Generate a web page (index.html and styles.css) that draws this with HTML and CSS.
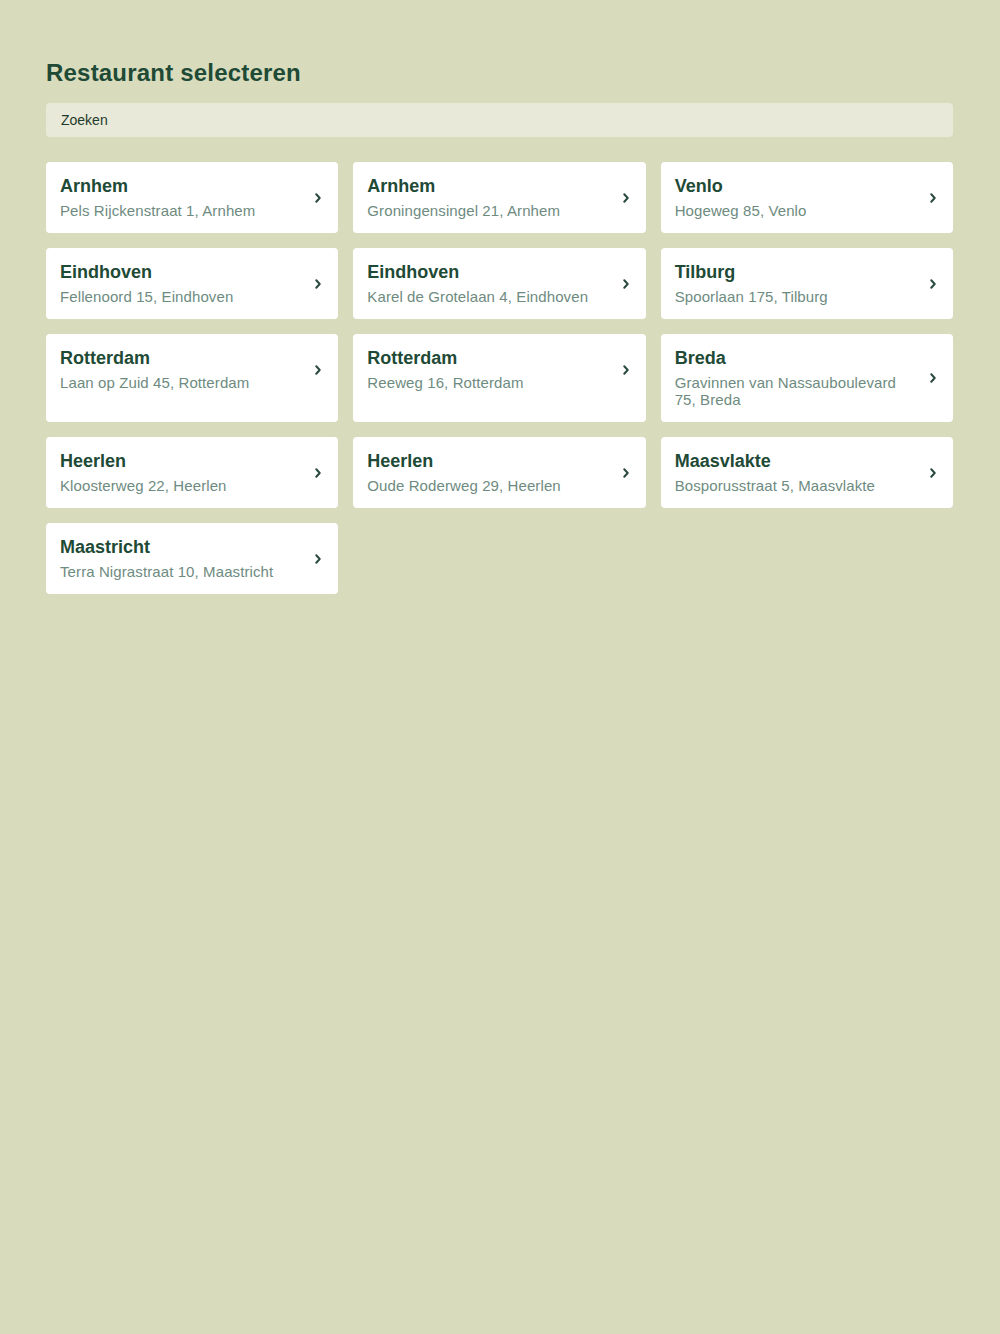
FILE: index.html
```html
<!DOCTYPE html>
<html lang="nl">
<head>
<meta charset="utf-8">
<title>Restaurant selecteren</title>
<link rel="stylesheet" href="styles.css">
</head>
<body>
<main class="page">
  <h1 class="title">Restaurant selecteren</h1>
  <div class="search">Zoeken</div>
  <div class="grid">
    <a class="card" href="#"><div class="row"><div class="info"><div class="name">Arnhem</div><div class="addr">Pels Rijckenstraat 1, Arnhem</div></div><svg class="chev" viewBox="0 0 6 10" width="6" height="10"><path d="M1.3 1.3l3.4 3.7-3.4 3.7" fill="none" stroke="#2b4a3f" stroke-width="2" stroke-linecap="round" stroke-linejoin="round"/></svg></div></a>
    <a class="card" href="#"><div class="row"><div class="info"><div class="name">Arnhem</div><div class="addr">Groningensingel 21, Arnhem</div></div><svg class="chev" viewBox="0 0 6 10" width="6" height="10"><path d="M1.3 1.3l3.4 3.7-3.4 3.7" fill="none" stroke="#2b4a3f" stroke-width="2" stroke-linecap="round" stroke-linejoin="round"/></svg></div></a>
    <a class="card" href="#"><div class="row"><div class="info"><div class="name">Venlo</div><div class="addr">Hogeweg 85, Venlo</div></div><svg class="chev" viewBox="0 0 6 10" width="6" height="10"><path d="M1.3 1.3l3.4 3.7-3.4 3.7" fill="none" stroke="#2b4a3f" stroke-width="2" stroke-linecap="round" stroke-linejoin="round"/></svg></div></a>
    <a class="card" href="#"><div class="row"><div class="info"><div class="name">Eindhoven</div><div class="addr">Fellenoord 15, Eindhoven</div></div><svg class="chev" viewBox="0 0 6 10" width="6" height="10"><path d="M1.3 1.3l3.4 3.7-3.4 3.7" fill="none" stroke="#2b4a3f" stroke-width="2" stroke-linecap="round" stroke-linejoin="round"/></svg></div></a>
    <a class="card" href="#"><div class="row"><div class="info"><div class="name">Eindhoven</div><div class="addr">Karel de Grotelaan 4, Eindhoven</div></div><svg class="chev" viewBox="0 0 6 10" width="6" height="10"><path d="M1.3 1.3l3.4 3.7-3.4 3.7" fill="none" stroke="#2b4a3f" stroke-width="2" stroke-linecap="round" stroke-linejoin="round"/></svg></div></a>
    <a class="card" href="#"><div class="row"><div class="info"><div class="name">Tilburg</div><div class="addr">Spoorlaan 175, Tilburg</div></div><svg class="chev" viewBox="0 0 6 10" width="6" height="10"><path d="M1.3 1.3l3.4 3.7-3.4 3.7" fill="none" stroke="#2b4a3f" stroke-width="2" stroke-linecap="round" stroke-linejoin="round"/></svg></div></a>
    <a class="card" href="#"><div class="row"><div class="info"><div class="name">Rotterdam</div><div class="addr">Laan op Zuid 45, Rotterdam</div></div><svg class="chev" viewBox="0 0 6 10" width="6" height="10"><path d="M1.3 1.3l3.4 3.7-3.4 3.7" fill="none" stroke="#2b4a3f" stroke-width="2" stroke-linecap="round" stroke-linejoin="round"/></svg></div></a>
    <a class="card" href="#"><div class="row"><div class="info"><div class="name">Rotterdam</div><div class="addr">Reeweg 16, Rotterdam</div></div><svg class="chev" viewBox="0 0 6 10" width="6" height="10"><path d="M1.3 1.3l3.4 3.7-3.4 3.7" fill="none" stroke="#2b4a3f" stroke-width="2" stroke-linecap="round" stroke-linejoin="round"/></svg></div></a>
    <a class="card" href="#"><div class="row"><div class="info"><div class="name">Breda</div><div class="addr">Gravinnen van Nassauboulevard 75, Breda</div></div><svg class="chev" viewBox="0 0 6 10" width="6" height="10"><path d="M1.3 1.3l3.4 3.7-3.4 3.7" fill="none" stroke="#2b4a3f" stroke-width="2" stroke-linecap="round" stroke-linejoin="round"/></svg></div></a>
    <a class="card" href="#"><div class="row"><div class="info"><div class="name">Heerlen</div><div class="addr">Kloosterweg 22, Heerlen</div></div><svg class="chev" viewBox="0 0 6 10" width="6" height="10"><path d="M1.3 1.3l3.4 3.7-3.4 3.7" fill="none" stroke="#2b4a3f" stroke-width="2" stroke-linecap="round" stroke-linejoin="round"/></svg></div></a>
    <a class="card" href="#"><div class="row"><div class="info"><div class="name">Heerlen</div><div class="addr">Oude Roderweg 29, Heerlen</div></div><svg class="chev" viewBox="0 0 6 10" width="6" height="10"><path d="M1.3 1.3l3.4 3.7-3.4 3.7" fill="none" stroke="#2b4a3f" stroke-width="2" stroke-linecap="round" stroke-linejoin="round"/></svg></div></a>
    <a class="card" href="#"><div class="row"><div class="info"><div class="name">Maasvlakte</div><div class="addr">Bosporusstraat 5, Maasvlakte</div></div><svg class="chev" viewBox="0 0 6 10" width="6" height="10"><path d="M1.3 1.3l3.4 3.7-3.4 3.7" fill="none" stroke="#2b4a3f" stroke-width="2" stroke-linecap="round" stroke-linejoin="round"/></svg></div></a>
    <a class="card" href="#"><div class="row"><div class="info"><div class="name">Maastricht</div><div class="addr">Terra Nigrastraat 10, Maastricht</div></div><svg class="chev" viewBox="0 0 6 10" width="6" height="10"><path d="M1.3 1.3l3.4 3.7-3.4 3.7" fill="none" stroke="#2b4a3f" stroke-width="2" stroke-linecap="round" stroke-linejoin="round"/></svg></div></a>
  </div>
</main>
</body>
</html>
```
FILE: styles.css
```css
html, body {
  margin: 0;
  padding: 0;
  background: #d9dcbc;
  min-height: 100%;
}
body {
  font-family: "Liberation Sans", Arial, sans-serif;
  color: #1e4a36;
}
.page {
  padding: 59px 47px 40px 46px;
}
.title {
  margin: 0;
  font-size: 24px;
  line-height: 28px;
  font-weight: 700;
  letter-spacing: 0.2px;
  color: #1e4a36;
}
.search {
  margin-top: 16px;
  height: 34px;
  box-sizing: border-box;
  padding: 0 15px;
  display: flex;
  align-items: center;
  background: #e8e9d8;
  border-radius: 4px;
  font-size: 14px;
  color: #1f3a2c;
}
.grid {
  margin-top: 25px;
  display: grid;
  grid-template-columns: repeat(3, 1fr);
  column-gap: 15px;
  row-gap: 15px;
}
.card {
  display: block;
  background: #ffffff;
  border-radius: 4px;
  padding: 13px 17px 14px 14px;
  text-decoration: none;
  color: inherit;
  box-sizing: border-box;
}
.row {
  display: flex;
  align-items: center;
}
.info {
  flex: 1;
  min-width: 0;
  padding-right: 20px;
}
.name {
  font-size: 18px;
  line-height: 22px;
  font-weight: 700;
  color: #1e4a36;
  margin-bottom: 5px;
}
.addr {
  font-size: 15px;
  line-height: 17px;
  letter-spacing: 0.1px;
  color: #6e8b7f;
}
.chev {
  flex: none;
  display: block;
  margin-top: 1px;
}
```
